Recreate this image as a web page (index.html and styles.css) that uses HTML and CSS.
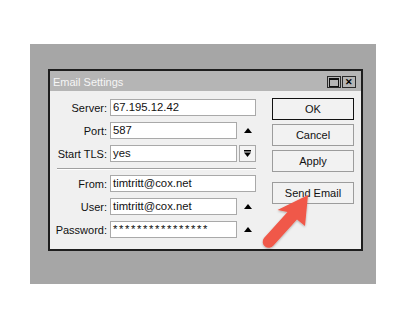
FILE: index.html
```html
<!DOCTYPE html>
<html lang="en">
<head>
    <meta charset="UTF-8">
    <title>Email Settings</title>
    <link rel="stylesheet" href="styles.css">
</head>
<body>
    <div class="frame">
        <div class="dialog">
            <div class="titlebar">
                <span class="title">Email Settings</span>
                <span class="tb-btns">
                    <span class="tb-btn"><span class="max-icon"></span></span>
                    <span class="tb-btn close">&#x2715;</span>
                </span>
            </div>
            <div class="content">
                <div class="form">
                    <div class="row">
                        <span class="label">Server:</span>
                        <span class="field wide">67.195.12.42</span>
                    </div>
                    <div class="row">
                        <span class="label">Port:</span>
                        <span class="field">587</span>
                        <span class="spin"><svg width="8" height="5" viewBox="0 0 8 5"><path d="M0 5 L4 0 L8 5 Z" fill="#000"/></svg></span>
                    </div>
                    <div class="row">
                        <span class="label">Start TLS:</span>
                        <span class="field">yes</span>
                        <span class="spin dropdown"><svg width="7" height="7" viewBox="0 0 7 7"><rect x="0" y="0" width="7" height="1.5" fill="#000"/><path d="M0 2.5 L7 2.5 L3.5 7 Z" fill="#000"/></svg></span>
                    </div>
                    <div class="sep"></div>
                    <div class="row">
                        <span class="label">From:</span>
                        <span class="field wide">timtritt@cox.net</span>
                    </div>
                    <div class="row">
                        <span class="label">User:</span>
                        <span class="field">timtritt@cox.net</span>
                        <span class="spin"><svg width="8" height="5" viewBox="0 0 8 5"><path d="M0 5 L4 0 L8 5 Z" fill="#000"/></svg></span>
                    </div>
                    <div class="row">
                        <span class="label">Password:</span>
                        <span class="field pass">****************</span>
                        <span class="spin"><svg width="8" height="5" viewBox="0 0 8 5"><path d="M0 5 L4 0 L8 5 Z" fill="#000"/></svg></span>
                    </div>
                </div>
                <div class="buttons">
                    <div class="btn default">OK</div>
                    <div class="btn">Cancel</div>
                    <div class="btn">Apply</div>
                    <div class="btn send">Send Email</div>
                </div>
            </div>
        </div>
    </div>

    <svg class="arrow" width="407" height="329" viewBox="0 0 407 329">
        <defs>
            <filter id="shadow" x="-20%" y="-20%" width="140%" height="140%">
                <feDropShadow dx="0" dy="1" stdDeviation="1" flood-color="#000" flood-opacity="0.3"/>
            </filter>
        </defs>
        <path d="M308 195 L305 226 L297 219.5 L273.5 245.5 A6 6 0 0 1 264 238 L287.5 212 L277.5 210 Z" fill="#f05848" filter="url(#shadow)"/>
    </svg>
</body>
</html>
```

FILE: styles.css
```css
body {
    margin: 0;
    background: #fff;
    font-family: "Liberation Sans", Arial, sans-serif;
    font-size: 11px;
    color: #000;
}
.frame {
    margin: 44px 0 0 30px;
    width: 346px;
    height: 240px;
    padding: 25px 0 0 18px;
    box-sizing: border-box;
    background: #a6a6a6;
}
.dialog {
    width: 315px;
    height: 182px;
    box-sizing: border-box;
    border: 2px solid #1e1e1e;
    background: #f0f0f0;
}
.titlebar {
    height: 20px;
    background: #b5b5b5;
    display: flex;
    align-items: center;
    justify-content: space-between;
    padding: 0 5px 0 3px;
}
.title {
    color: #f6f6f6;
    font-size: 11px;
    margin-top: 1px;
}
.tb-btns {
    display: flex;
    gap: 1px;
    margin-top: 2px;
}
.tb-btn {
    width: 14px;
    height: 12px;
    box-sizing: border-box;
    border: 1px solid #2a2a2a;
    display: flex;
    align-items: center;
    justify-content: center;
}
.max-icon {
    width: 8px;
    height: 6px;
    border: 1px solid #111;
    border-top-width: 2px;
}
.close {
    font-size: 9px;
    font-weight: bold;
    line-height: 1;
}
.content {
    display: flex;
    padding-top: 7px;
}
.form {
    padding-top: 1px;
    width: 206px;
}
.row {
    display: flex;
    align-items: center;
    height: 17px;
    margin-bottom: 6px;
}
.label {
    width: 57px;
    text-align: right;
    margin-right: 3px;
    color: #111;
}
.field {
    width: 127px;
    height: 17px;
    box-sizing: border-box;
    border: 1px solid #a9a9a9;
    background: #fff;
    padding: 0 2px;
    line-height: 15px;
    font-size: 11.3px;
    color: #111;
}
.field.wide {
    width: 146px;
}
.field.pass {
    letter-spacing: 1.6px;
}
.spin {
    width: 17px;
    height: 17px;
    margin-left: 2px;
    display: flex;
    align-items: center;
    justify-content: center;
    box-sizing: border-box;
}
.spin.dropdown {
    border: 1px solid #a9a9a9;
    background: #f4f4f4;
}
.sep {
    height: 1px;
    background: #a0a0a0;
    margin: 1px 0 6px 7px;
    box-shadow: 0 1px 0 #fff;
}
.buttons {
    margin-left: 16px;
    width: 82px;
    display: flex;
    flex-direction: column;
    gap: 4px;
}
.btn {
    height: 22px;
    box-sizing: border-box;
    border: 1px solid #9c9c9c;
    background: #f2f2f2;
    display: flex;
    align-items: center;
    justify-content: center;
    font-size: 11px;
    color: #111;
}
.btn.default {
    border: 1px solid #111;
}
.btn.send {
    margin-top: 6px;
}
.arrow {
    position: absolute;
    left: 0;
    top: 0;
    pointer-events: none;
}
```
